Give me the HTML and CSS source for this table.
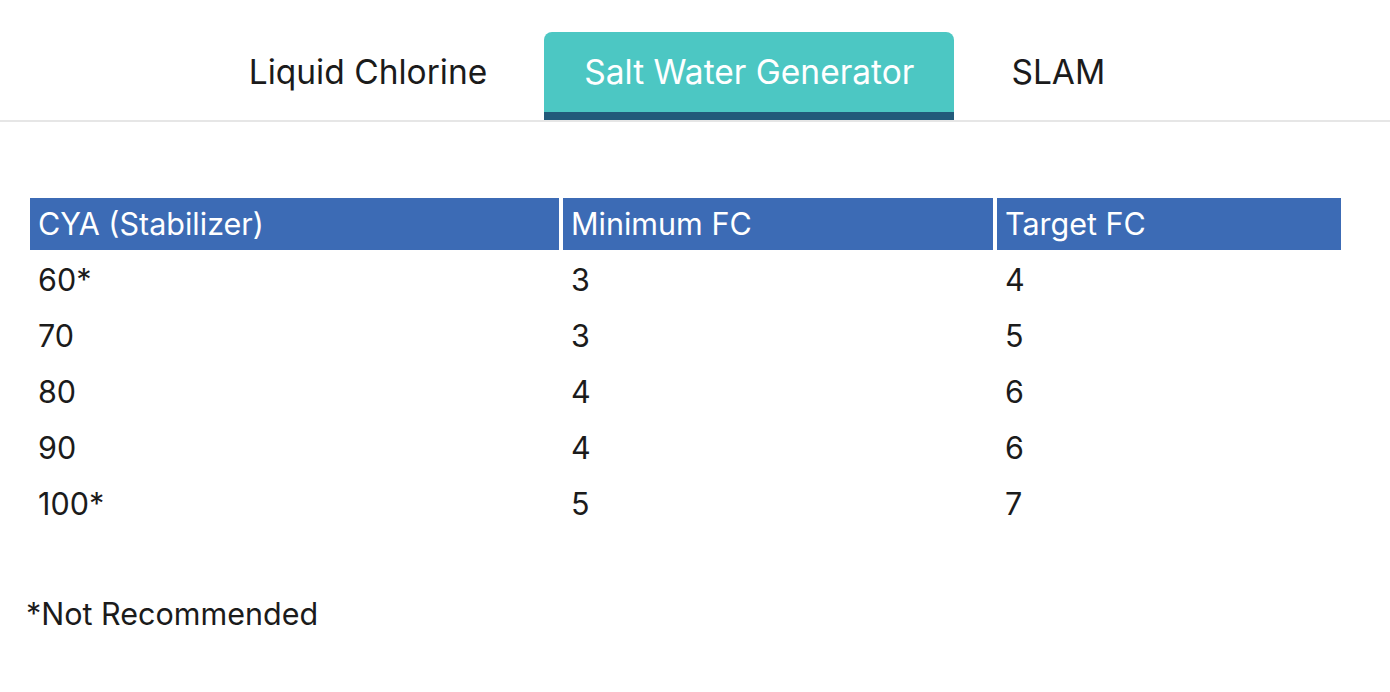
FILE: index.html
```html
<!DOCTYPE html>
<html>
<head>
<meta charset="utf-8">
<link rel="stylesheet" href="styles.css">
</head>
<body>
<nav class="tabs">
  <div class="tab">Liquid Chlorine</div>
  <div class="tab active">Salt Water Generator</div>
  <div class="tab">SLAM</div>
</nav>
<main class="content">
  <table class="fc-table">
    <thead>
      <tr><th class="c1">CYA (Stabilizer)</th><th class="c2">Minimum FC</th><th class="c3">Target FC</th></tr>
    </thead>
    <tbody>
      <tr><td>60*</td><td>3</td><td>4</td></tr>
      <tr><td>70</td><td>3</td><td>5</td></tr>
      <tr><td>80</td><td>4</td><td>6</td></tr>
      <tr><td>90</td><td>4</td><td>6</td></tr>
      <tr><td>100*</td><td>5</td><td>7</td></tr>
    </tbody>
  </table>
  <p class="note">*Not Recommended</p>
</main>
</body>
</html>
```
FILE: styles.css
```css
html, body {
  margin: 0;
  padding: 0;
  background: #ffffff;
  font-family: Inter, "Liberation Sans", sans-serif;
  color: #1b1b1b;
}
.tabs {
  display: flex;
  justify-content: center;
  gap: 17px;
  padding-top: 32px;
  padding-right: 36px;
  border-bottom: 2px solid #e6e6e6;
}
.tab {
  font-size: 33.5px;
  height: 80px;
  line-height: 80px;
  padding: 0 40px;
  border-bottom: 8px solid transparent;
  border-radius: 8px 8px 0 0;
  color: #1b1b1b;
}
.tab.active {
  background: #4cc7c3;
  color: #ffffff;
  border-bottom-color: #225a7a;
}
.content {
  padding: 72px 26px 0 26px;
}
.fc-table {
  border-spacing: 4px;
  margin: 0;
  font-size: 30.5px;
  line-height: 1.2;
  width: 1319px;
}
.fc-table th {
  background: #3c6bb5;
  color: #ffffff;
  font-weight: 400;
  text-align: left;
  height: 52px;
  padding: 0 8px;
}
.c1 { width: 513px; }
.c2 { width: 414px; }
.c3 { width: 328px; }
.fc-table td {
  height: 52px;
  padding: 0 8px;
}
.note {
  font-size: 30.5px;
  line-height: 36px;
  margin: 62px 0 0 0;
}
```
